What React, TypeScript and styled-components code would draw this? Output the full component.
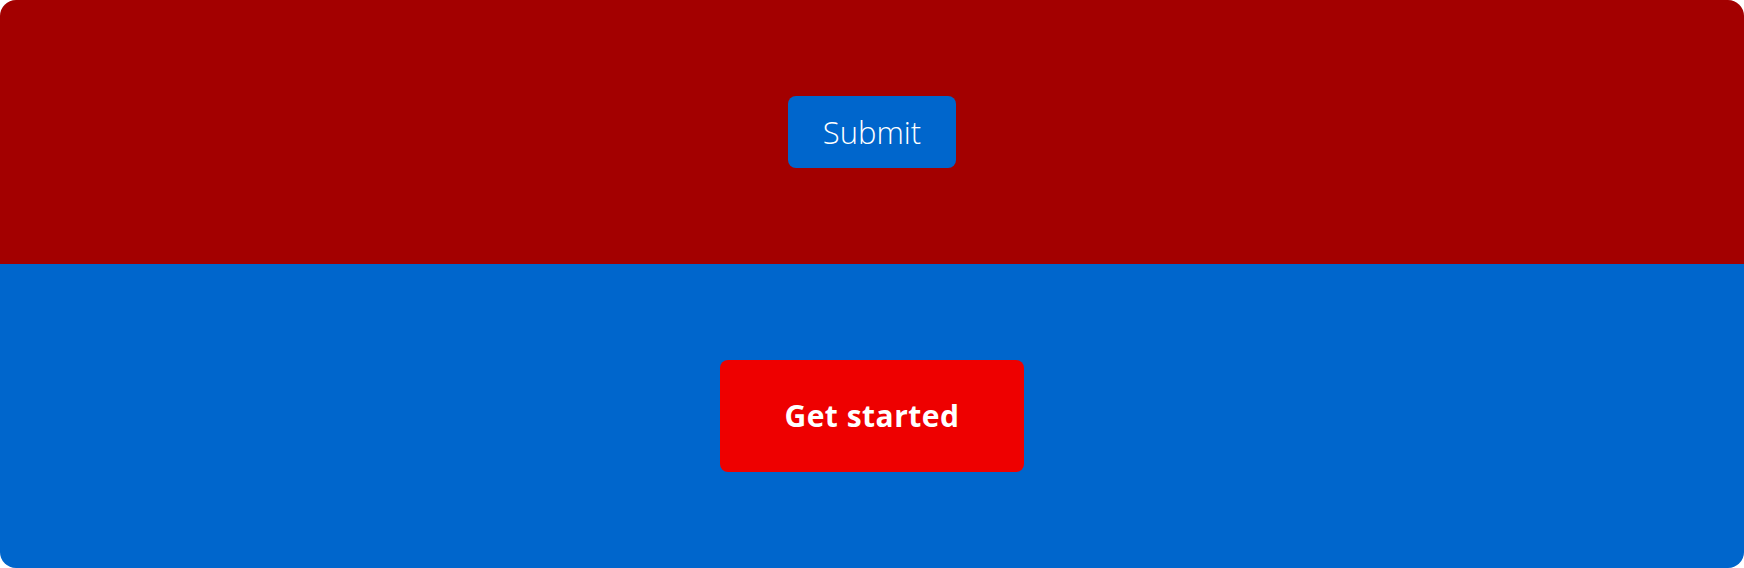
import React from "react";
import styled, { createGlobalStyle } from "styled-components";

const GlobalStyle = createGlobalStyle`
  html, body {
    margin: 0;
    padding: 0;
    background: #ffffff;
  }
  body {
    font-family: "Open Sans", "Liberation Sans", sans-serif;
  }
`;

const Frame = styled.div`
  width: 1744px;
  height: 568px;
  border-radius: 16px;
  overflow: hidden;
  display: flex;
  flex-direction: column;
`;

const Section = styled.section<{ $bg: string; $height: number }>`
  height: ${(p) => p.$height}px;
  background: ${(p) => p.$bg};
  display: flex;
  align-items: center;
  justify-content: center;
`;

const Button = styled.button<{
  $bg: string;
  $weight: number;
  $size: number;
  $w: number;
  $h: number;
  $spacing?: number;
}>`
  box-sizing: border-box;
  border: none;
  margin: 0;
  padding: 0;
  cursor: pointer;
  display: flex;
  align-items: center;
  justify-content: center;
  width: ${(p) => p.$w}px;
  height: ${(p) => p.$h}px;
  color: #ffffff;
  background: ${(p) => p.$bg};
  border-radius: 8px;
  font-family: "Open Sans", "Liberation Sans", sans-serif;
  font-weight: ${(p) => p.$weight};
  font-size: ${(p) => p.$size}px;
  line-height: 1.25;
  letter-spacing: ${(p) => p.$spacing ?? 0}px;
`;

export default function App() {
  return (
    <>
      <GlobalStyle />
      <Frame>
        <Section $bg="#a30000" $height={264}>
          <Button $bg="#0066cc" $weight={300} $size={31} $w={168} $h={72}>
            Submit
          </Button>
        </Section>
        <Section $bg="#0066cc" $height={304}>
          <Button
            $bg="#ee0000"
            $weight={700}
            $size={30}
            $w={304}
            $h={112}
            $spacing={0.5}
          >
            Get started
          </Button>
        </Section>
      </Frame>
    </>
  );
}
